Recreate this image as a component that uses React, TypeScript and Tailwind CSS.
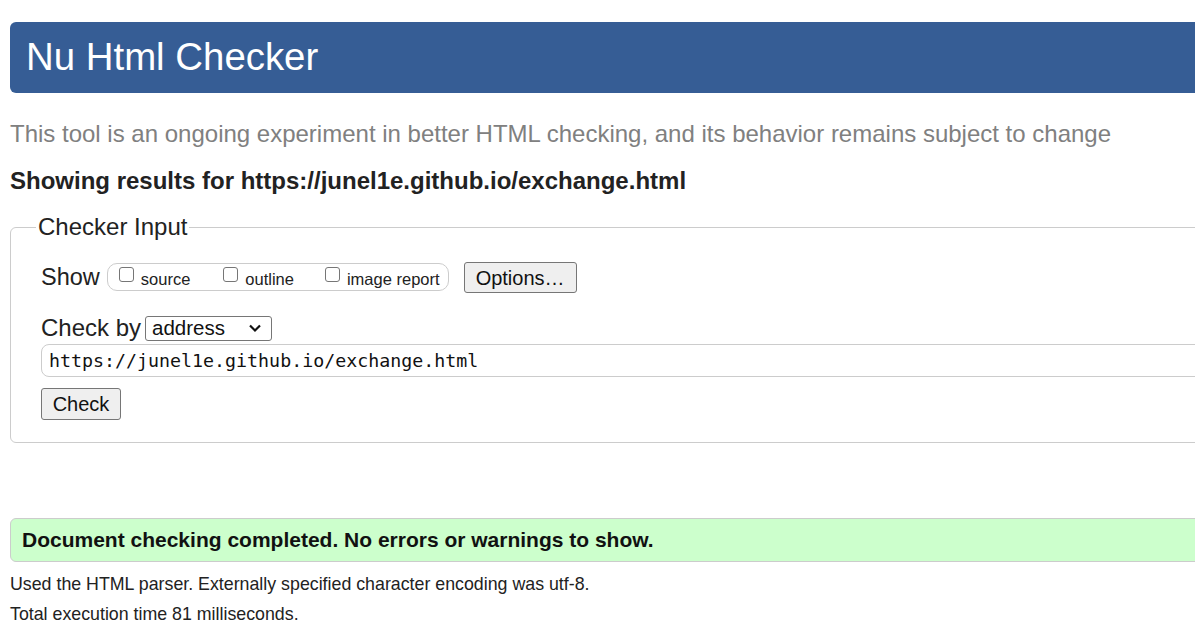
import React from "react";

export default function App() {
  return (
    <div className="w-[1195px] h-[628px] overflow-hidden bg-white" style={{ fontFamily: '"Liberation Sans", Arial, sans-serif' }}>
      <div className="w-[1240px] pl-[10px] pt-[22px]">
        <div className="h-[71px] rounded-[6px] bg-[#365d95] flex items-center pl-[16px]">
          <h1 className="text-white text-[38.4px] leading-none">Nu Html Checker</h1>
        </div>
        <p className="mt-[28px] text-[24px] leading-[26px] text-[#808080] whitespace-nowrap">
          This tool is an ongoing experiment in better HTML checking, and its behavior remains subject to change
        </p>
        <p className="mt-[21px] text-[24px] leading-[26px] font-bold text-[#222] whitespace-nowrap">
          Showing results for https://junel1e.github.io/exchange.html
        </p>
        <fieldset className="mt-[20px] border border-[#cccccc] rounded-[6px] pl-[30px] pr-0 h-[229px]">
          <legend className="text-[24px] text-[#222] px-[2px] ml-[-5px] leading-[26px]">Checker Input</legend>
          <div className="flex items-center mt-[21px] h-[32px]">
            <span className="text-[23.5px] text-[#222] mr-[7px] mt-[2px]">Show</span>
            <div className="flex items-center h-[28px] border border-[#cccccc] rounded-[10px] pl-[11px] pr-[8px] whitespace-nowrap">
              <label className="flex items-center shrink-0 text-[16.5px] text-[#222] mr-[33px]">
                <span className="w-[15px] h-[15px] border border-[#767676] rounded-[3px] mb-[5px] mr-[7px]" />
                <span className="mt-[4px]">source</span>
              </label>
              <label className="flex items-center shrink-0 text-[16.5px] text-[#222] mr-[31px]">
                <span className="w-[15px] h-[15px] border border-[#767676] rounded-[3px] mb-[5px] mr-[7px]" />
                <span className="mt-[4px]">outline</span>
              </label>
              <label className="flex items-center shrink-0 text-[16.5px] text-[#222]">
                <span className="w-[15px] h-[15px] border border-[#767676] rounded-[3px] mb-[5px] mr-[7px]" />
                <span className="mt-[4px]">image report</span>
              </label>
            </div>
            <button className="ml-[15px] h-[31px] w-[113px] border border-[#767676] rounded-[3px] bg-[#efefef] text-[20px] text-[#111]">
              Options…
            </button>
          </div>
          <div className="flex items-center mt-[22px] h-[26px]">
            <span className="text-[24px] text-[#222] mr-[4px]">Check by</span>
            <div className="h-[25px] w-[127px] border border-[#767676] rounded-[3px] flex items-center justify-between pl-[6px] pr-[9px]">
              <span className="text-[20.5px] text-[#111] leading-none">address</span>
              <svg width="14" height="10" viewBox="0 0 14 10"><path d="M2 2.5 L7 7.5 L12 2.5" fill="none" stroke="#111" strokeWidth="2.2" /></svg>
            </div>
          </div>
          <div className="mt-[3px] h-[33px] border border-[#cccccc] rounded-[8px] flex items-center pl-[7px]">
            <span className="text-[18.3px] text-[#111]" style={{ fontFamily: '"DejaVu Sans Mono", monospace' }}>
              https://junel1e.github.io/exchange.html
            </span>
          </div>
          <button className="mt-[11px] h-[32px] w-[80px] border border-[#767676] rounded-[3px] bg-[#efefef] text-[20px] text-[#111]">
            Check
          </button>
        </fieldset>
        <div className="mt-[75px] h-[44px] rounded-[6px] border border-[#cccccc] bg-[#ccffcc] flex items-center pl-[11px]">
          <span className="text-[21px] font-bold text-[#111] whitespace-nowrap">Document checking completed. No errors or warnings to show.</span>
        </div>
        <p className="mt-[11px] text-[17.8px] leading-[22px] text-[#222]">
          Used the HTML parser. Externally specified character encoding was utf-8.
        </p>
        <p className="mt-[8px] text-[17.8px] leading-[22px] text-[#222]">Total execution time 81 milliseconds.</p>
      </div>
    </div>
  );
}
